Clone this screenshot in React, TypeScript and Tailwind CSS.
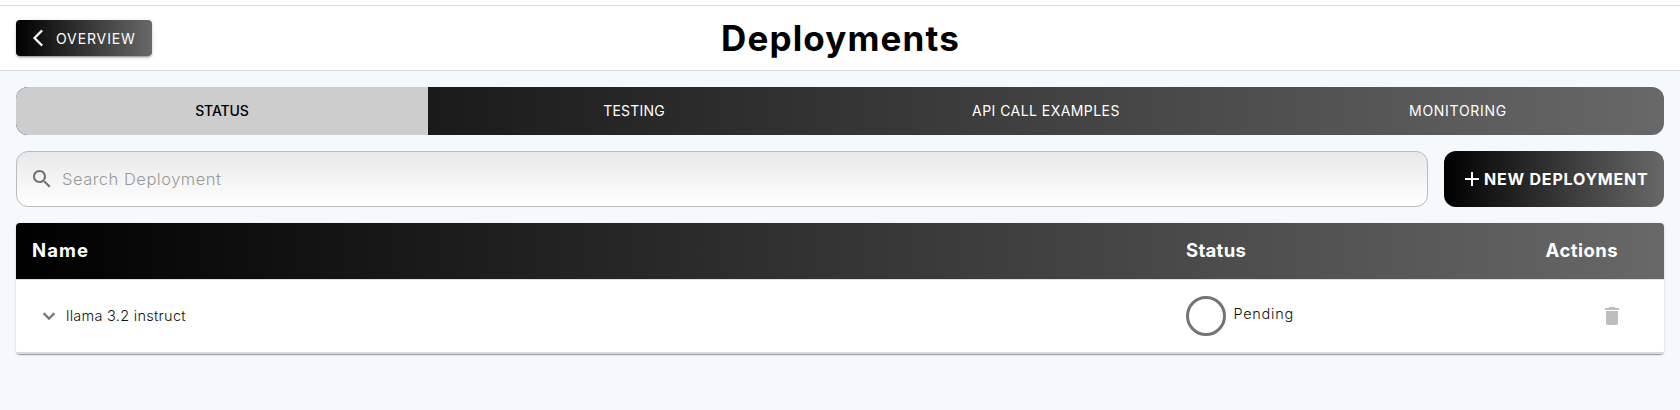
import React from 'react';

const tabs = [
  { label: 'STATUS', style: 'bg-[#cdcdcd] text-black font-medium tracking-[-0.1px]' },
  { label: 'TESTING', style: 'text-white tracking-[0.2px]' },
  { label: 'API CALL EXAMPLES', style: 'text-white tracking-[0.45px]' },
  { label: 'MONITORING', style: 'text-white tracking-[0.72px]' },
];

export default function App() {
  return (
    <div className="flex h-[410px] w-full flex-col overflow-hidden bg-[#f5f9fc] font-['Inter',sans-serif] text-black">
      <div className="h-[6px] shrink-0 border-b border-[#dadcde] bg-white" />
      <header className="grid h-[65px] shrink-0 grid-cols-[1fr_auto_1fr] items-center border-b border-[#d5d9dc] bg-white px-4">
        <button className="flex h-9 w-[136px] items-center rounded-[4px] bg-linear-[90deg,#000,#686868] pl-3 text-[14px] text-white shadow-[0_3px_1px_-2px_rgba(0,0,0,0.2),0_2px_2px_0_rgba(0,0,0,0.14),0_1px_5px_0_rgba(0,0,0,0.12)]">
          <svg viewBox="0 0 24 24" className="h-5 w-5" fill="currentColor" stroke="currentColor" strokeWidth="0.3">
            <path d="M17.77 3.77 16 2 6 12l10 10 1.77-1.77L9.54 12z" />
          </svg>
          <span className="ml-2 whitespace-nowrap tracking-[0.88px]">OVERVIEW</span>
        </button>
        <h1 className="pl-px text-[35px] font-bold leading-none tracking-[1.15px]">Deployments</h1>
        <div />
      </header>

      <main className="flex flex-col gap-4 p-4">
        <nav className="grid h-12 grid-cols-4 overflow-hidden rounded-xl bg-linear-[90deg,#000,#686868]">
          {tabs.map((t) => (
            <button key={t.label} className={`pb-px text-[14px] ${t.style}`}>
              {t.label}
            </button>
          ))}
        </nav>

        <div className="flex h-14 gap-4">
          <div className="flex flex-1 items-center rounded-xl border border-[#b9bbbd] bg-linear-to-b from-[#e9e9e9] to-white pl-[13px]">
            <svg viewBox="0 0 24 24" className="h-6 w-6 text-[#707070]" fill="currentColor">
              <path d="M15.5 14h-.79l-.28-.27C15.41 12.59 16 11.11 16 9.5 16 5.91 13.09 3 9.5 3S3 5.91 3 9.5 5.91 16 9.5 16c1.61 0 3.09-.59 4.23-1.57l.27.28v.79l5 4.99L20.49 19zm-6 0C7.01 14 5 11.99 5 9.5S7.01 5 9.5 5 14 7.01 14 9.5 11.99 14 9.5 14" />
            </svg>
            <span className="ml-2 text-[16.5px] font-light tracking-[0.5px] text-[#999]">Search Deployment</span>
          </div>
          <button className="flex w-[220px] items-center rounded-xl bg-linear-[90deg,#000,#686868] pl-4 text-[16px] font-bold text-white">
            <svg viewBox="0 0 24 24" className="h-6 w-6" fill="currentColor">
              <path d="M19 13h-6v6h-2v-6H5v-2h6V5h2v6h6z" />
            </svg>
            <span className="whitespace-nowrap tracking-[0.8px]">NEW DEPLOYMENT</span>
          </button>
        </div>

        <section className="overflow-hidden rounded-[4px] bg-white shadow-[0_2px_1px_-1px_rgba(0,0,0,0.2),0_1px_1px_0_rgba(0,0,0,0.14),0_1px_3px_0_rgba(0,0,0,0.12)]">
          <div className="flex h-14 items-center bg-linear-[90deg,#000,#686868] text-[18.5px] font-bold text-white">
            <div className="w-[1154px] pl-4 tracking-[1.1px]">Name</div>
            <div className="flex-1 pl-4 tracking-[0.3px]">Status</div>
            <div className="pr-[46px] tracking-[0.45px]">Actions</div>
          </div>
          <div className="flex h-[75px] items-center border-t border-b-2 border-t-[#e0e0e0] border-b-[#dadada] text-[14.5px]">
            <div className="flex w-[1154px] items-center pl-[21px]">
              <svg viewBox="0 0 24 24" className="h-6 w-6 text-[#757575]" fill="currentColor" stroke="currentColor" strokeWidth="0.3">
                <path d="M7.41 8.59 12 13.17l4.59-4.58L18 10l-6 6-6-6z" />
              </svg>
              <span className="mb-px ml-[5px] font-light tracking-[0.28px] text-[#111]">llama 3.2 instruct</span>
            </div>
            <div className="flex flex-1 items-center pl-4">
              <div className="h-10 w-10 rounded-full border-[3px] border-[#757575]" />
              <span className="mb-[5px] ml-[7.5px] font-light tracking-[0.72px] text-[#111]">Pending</span>
            </div>
            <svg viewBox="0 0 24 24" className="mr-10 h-6 w-6 text-[#bdbdbd]" fill="currentColor">
              <path d="M6 19c0 1.1.9 2 2 2h8c1.100 0 2-.9 2-2V7H6zM19 4h-3.500l-1-1h-5l-1 1H5v2h14z" />
            </svg>
          </div>
        </section>
      </main>
    </div>
  );
}
